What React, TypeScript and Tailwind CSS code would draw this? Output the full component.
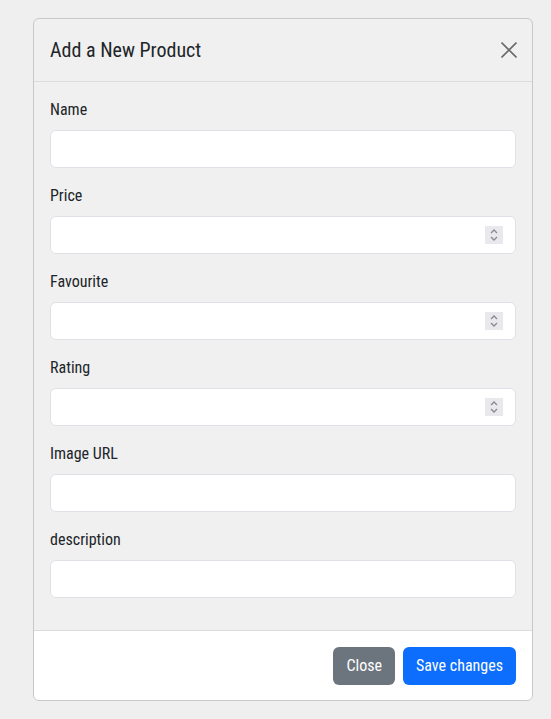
import React from 'react';

const fields = [
  { label: 'Name', spin: false },
  { label: 'Price', spin: true },
  { label: 'Favourite', spin: true },
  { label: 'Rating', spin: true },
  { label: 'Image URL', spin: false },
  { label: 'description', spin: false },
];

const Spinner = () => (
  <div className="absolute right-[13px] top-[10px] w-[18px] h-[18px] bg-[#e9e9ed] flex items-center justify-center">
    <svg width="10" height="14" viewBox="0 0 10 14" fill="none" stroke="#8a8a93" strokeWidth="1.4">
      <path d="M2 5 L5 2 L8 5" />
      <path d="M2 9 L5 12 L8 9" />
    </svg>
  </div>
);

const App: React.FC = () => {
  return (
    <div className="min-h-[719px] bg-[#efefef] pt-[18px] pl-[33px] font-stretch-condensed" style={{ fontFamily: '"Roboto Condensed", Roboto, "Liberation Sans", sans-serif' }}>
      <div className="w-[500px] border border-[#c8c8c8] rounded-[6px] overflow-hidden bg-[#f0f0f0] text-[#212529]">
        <div className="h-[63px] pl-4 pr-[15px] flex items-center justify-between border-b border-[#dcdcdc]">
          <h5 className="text-[20px] leading-6 font-normal">Add a New Product</h5>
          <button className="w-4 h-4 flex items-center justify-center">
            <svg width="16" height="16" viewBox="0 0 16 16" stroke="#6c6c6c" strokeWidth="1.6">
              <path d="M0.5 0.5 L15.5 15.5 M15.5 0.5 L0.5 15.5" />
            </svg>
          </button>
        </div>
        <div className="px-4 pt-4 pb-4">
          {fields.map((f) => (
            <div key={f.label} className="mb-4">
              <label className="block text-[16px] leading-6 mb-2">{f.label}</label>
              <div className="relative">
                <input type="text" className="w-full h-[38px] bg-white border border-[#dee2e6] rounded-[6px] px-3 outline-none" />
                {f.spin && <Spinner />}
              </div>
            </div>
          ))}
        </div>
        <div className="bg-white border-t border-[#dcdcdc] h-[70px] px-4 flex items-center justify-end gap-2">
          <button className="h-[38px] px-[13px] rounded-[6px] bg-[#6c757d] text-white text-[16px]">Close</button>
          <button className="h-[38px] px-[13px] rounded-[6px] bg-[#0d6efd] text-white text-[16px]">Save changes</button>
        </div>
      </div>
    </div>
  );
};

export default App;
